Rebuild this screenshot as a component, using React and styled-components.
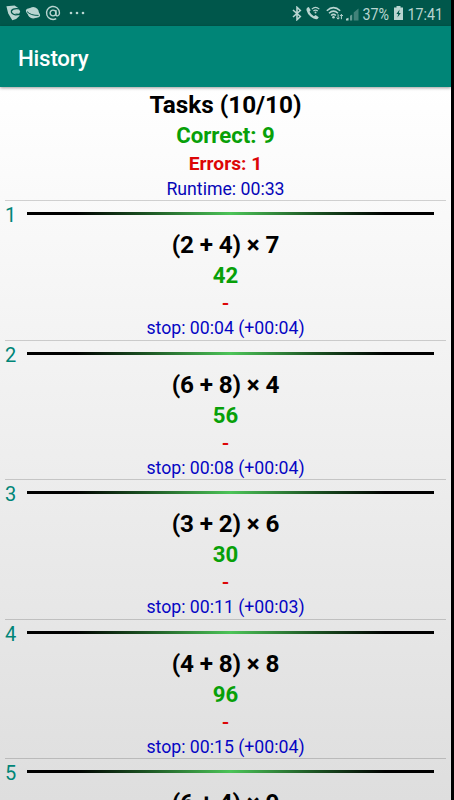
import React from 'react';
import styled, { createGlobalStyle } from 'styled-components';

const GlobalStyle = createGlobalStyle`
  * {
    box-sizing: border-box;
  }
  body {
    margin: 0;
    background: #000000;
    font-family: Roboto, sans-serif;
    overflow: hidden;
  }
`;
const Screen = styled.div`
  display: flex;
  flex-direction: column;
  width: 451px;
  height: 800px;
  overflow: hidden;
  background: #dedede;
`;
const StatusBar = styled.header`
  flex: none;
  display: flex;
  align-items: center;
  justify-content: space-between;
  height: 26px;
  padding: 0 8px 0 6px;
  background: #00574b;
  color: #b9d5d1;
`;
const IconGroup = styled.div`
  display: flex;
  align-items: center;
  height: 26px;
  svg {
    display: block;
    flex: none;
  }
`;
const StatusText = styled.span`
  display: flex;
  justify-content: flex-end;
  width: ${props => props.$width}px;
  font-size: 17px;
  line-height: 26px;
  padding-top: 2px;
  white-space: nowrap;
  transform: scaleX(0.84);
  transform-origin: right;
`;
const AppBar = styled.div`
  flex: none;
  display: flex;
  align-items: center;
  height: 61px;
  padding: 2px 18px 0;
  background: #008577;
  color: #ffffff;
  box-shadow: 0 1px 3px rgba(0, 0, 0, 0.4);
  z-index: 1;
  h1 {
    margin: 0;
    font-size: 22.3px;
    font-weight: 500;
    letter-spacing: -0.2px;
  }
`;
const Content = styled.main`
  flex: 1;
  overflow: hidden;
  background: linear-gradient(#ffffff, #dedede);
`;
const Summary = styled.section`
  display: flex;
  flex-direction: column;
  align-items: center;
  height: 113px;
  padding-top: 2px;
`;
const Line = styled.div`
  height: ${props => props.$height}px;
  line-height: ${props => props.$height}px;
  font-size: ${props => props.$size}px;
  font-weight: ${props => (props.$bold ? 700 : 400)};
  letter-spacing: ${props => props.$spacing || 0}px;
  color: ${props => props.$color};
  white-space: pre;
`;
const Task = styled.article`
  height: 139.6px;
  margin: 0 5px;
  border-top: 1px solid rgba(0, 0, 0, 0.17);
`;
const TaskHead = styled.div`
  display: flex;
  height: 27px;
`;
const Index = styled.span`
  width: 22px;
  font-size: 20px;
  line-height: 29px;
  color: #008577;
`;
const Bar = styled.div`
  width: 407px;
  height: 3px;
  margin-top: 11px;
  background: linear-gradient(90deg, #000000 12%, #1b5222 29%, #4cc458 50%, #1b5222 71%, #000000 88%);
`;
const TaskBody = styled.div`
  display: flex;
  flex-direction: column;
  align-items: center;
`;

const SwirlIcon = () => (
  <svg width="15" height="16" viewBox="0 0 15 16">
    <path d="M.4 1.2 8.6.6Q12.6 2.4 14.2 6.4L13.2 8.8 8.8 8.6 13.9 10.4Q11 14.2 6.3 15.2L2.2 8.4Z" fill="currentColor" />
    <path d="M13.4 3.9Q7.2 3 5.4 5.8 5 9 9.4 9.8L14.6 9.3" fill="none" stroke="#00574b" strokeWidth="1.3" />
  </svg>
);

const PlanetIcon = () => (
  <svg width="16" height="14" viewBox="0 0 16 14">
    <ellipse cx="8" cy="7" rx="7.6" ry="3.9" transform="rotate(25 8 7)" fill="currentColor" />
    <circle cx="8.2" cy="6.8" r="5.7" fill="currentColor" />
    <path d="M2 5.6Q5.8 9.6 13.6 9.4" fill="none" stroke="#00574b" strokeWidth="1" />
  </svg>
);

const AtIcon = () => (
  <svg width="16" height="16" viewBox="0 0 16 16" fill="none" stroke="currentColor" strokeWidth="1.4">
    <circle cx="8" cy="8" r="2.9" />
    <path d="M10.9 5V9.2C10.9 11.9 14.5 11.2 14.5 8A6.5 6.5 0 1 0 11.2 13.6" />
  </svg>
);

const MoreIcon = () => (
  <svg width="16" height="4" viewBox="0 0 16 4" fill="currentColor">
    <circle cx="2" cy="2" r="1.3" />
    <circle cx="8" cy="2" r="1.3" />
    <circle cx="14" cy="2" r="1.3" />
  </svg>
);

const BluetoothIcon = () => (
  <svg width="10" height="15" viewBox="0 0 10 15" fill="none" stroke="currentColor" strokeWidth="1.6">
    <path d="M1 4 8.3 10.5 5 13.7V1.3L8.3 4.5 1 11" />
  </svg>
);

const CallIcon = () => (
  <svg width="14" height="14" viewBox="0 0 14 14">
    <path d="M2.8.9 4.7 4.2 3.5 5.8Q5 8.8 7.9 10.3L9.6 9 12.8 11.2 11.5 13Q8.6 14 4.8 10.8 1.4 8 .5 4.2 0 1.8 2.8.9Z" fill="currentColor" />
    <path d="M5.8 3.1Q9.5-.3 13.3 3.1M7.4 5Q9.6 3.1 11.7 5" fill="none" stroke="currentColor" strokeWidth="1.2" />
    <circle cx="9.5" cy="6.6" r="1" fill="currentColor" />
  </svg>
);

const WifiIcon = () => (
  <svg width="18" height="15" viewBox="0 0 18 15" fill="none" stroke="currentColor">
    <path d="M.8 4.8Q7.5-1.6 14.2 4.8M3 7.3Q7.5 3 12 7.3M5.1 9.5Q7.5 7.3 9.9 9.5" strokeWidth="1.5" />
    <circle cx="7.5" cy="11.3" r="1.3" fill="currentColor" stroke="none" />
    <path d="M12.1 8.3V13M10.6 11.6 12.1 13.2 13.6 11.6M15.4 13.2V8.5M13.9 10 15.4 8.4 16.9 10" strokeWidth="1" />
  </svg>
);

const SignalIcon = () => (
  <svg width="13" height="13" viewBox="0 0 13 13" fill="currentColor">
    <path d="M0 12.5V10.8L2.5 9.7V12.5Z" />
    <path d="M4 12.5V7.8L6.2 6.4V12.5Z" opacity=".55" />
    <path d="M7.7 12.5V4.5L12.5.5V12.5Z" opacity=".35" />
  </svg>
);

const BatteryIcon = () => (
  <svg width="9" height="14" viewBox="0 0 9 14">
    <path d="M2.5 0H6.5V1.4H9V14H0V1.4H2.5Z" fill="currentColor" />
    <path d="M5.6 3.6 2.4 8H4.3L3.4 11.4 6.8 6.9H4.9Z" fill="#00574b" />
  </svg>
);

const Slot = styled.span`
  margin-left: ${props => props.$gap || 0}px;
  padding-top: ${props => props.$drop || 0}px;
`;

const tasks = [
  { text: '(2 + 4) × 7', answer: '42', stop: 'stop: 00:04 (+00:04)' },
  { text: '(6 + 8) × 4', answer: '56', stop: 'stop: 00:08 (+00:04)' },
  { text: '(3 + 2) × 6', answer: '30', stop: 'stop: 00:11 (+00:03)' },
  { text: '(4 + 8) × 8', answer: '96', stop: 'stop: 00:15 (+00:04)' },
  { text: '(6 + 4) × 9' },
];

const App = () => {
  return (
    <>
      <GlobalStyle />
      <Screen>
        <StatusBar>
          <IconGroup>
            <Slot><SwirlIcon /></Slot>
            <Slot $gap={4}><PlanetIcon /></Slot>
            <Slot $gap={4}><AtIcon /></Slot>
            <Slot $gap={8}><MoreIcon /></Slot>
          </IconGroup>
          <IconGroup>
            <Slot $drop={1}><BluetoothIcon /></Slot>
            <Slot $gap={4}><CallIcon /></Slot>
            <Slot $gap={6} $drop={1}><WifiIcon /></Slot>
            <Slot $gap={2} $drop={2}><SignalIcon /></Slot>
            <StatusText $width={30}>37%</StatusText>
            <Slot $gap={5}><BatteryIcon /></Slot>
            <StatusText $width={40}>17:41</StatusText>
          </IconGroup>
        </StatusBar>
        <AppBar>
          <h1>History</h1>
        </AppBar>
        <Content>
          <Summary>
            <Line $height={32} $size={24.3} $color="#000000" $bold>Tasks (10/10)</Line>
            <Line $height={29} $size={22.2} $color="#08a008" $bold>Correct: 9</Line>
            <Line $height={28} $size={19.2} $color="#dc0606" $bold>Errors: 1</Line>
            <Line $height={22} $size={17.7} $color="#0606b8">Runtime: 00:33</Line>
          </Summary>
          {tasks.map((task, i) => (
            <Task key={task.text}>
              <TaskHead>
                <Index>{i + 1}</Index>
                <Bar />
              </TaskHead>
              <TaskBody>
                <Line $height={33} $size={24.3} $spacing={-0.15} $color="#000000" $bold>{task.text}</Line>
                {task.answer && (
                  <>
                    <Line $height={29} $size={22.2} $color="#08a008" $bold>{task.answer}</Line>
                    <Line $height={27} $size={19.2} $color="#dc0606" $bold>-</Line>
                    <Line $height={23} $size={17.7} $color="#0606c4">{task.stop}</Line>
                  </>
                )}
              </TaskBody>
            </Task>
          ))}
        </Content>
      </Screen>
    </>
  );
};

export default App;
